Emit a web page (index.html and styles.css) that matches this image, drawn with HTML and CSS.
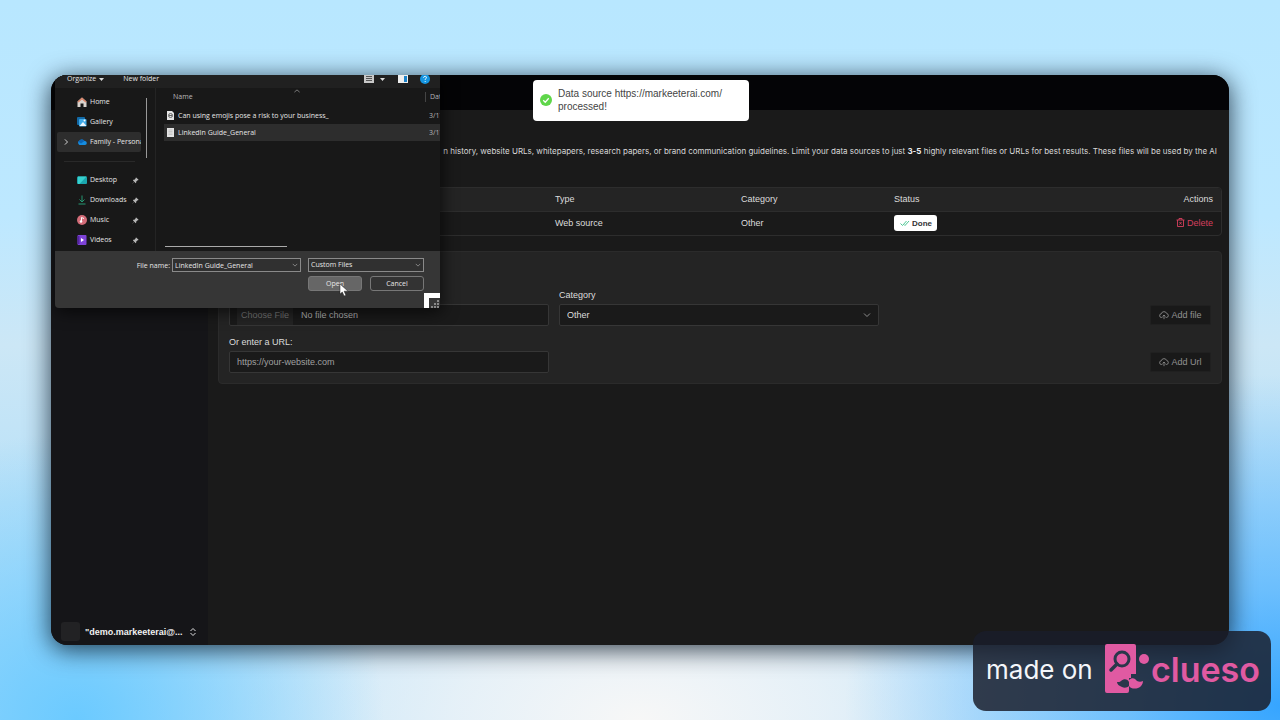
FILE: index.html
```html
<!DOCTYPE html>
<html lang="en">
<head>
<meta charset="utf-8">
<title>Data sources</title>
<link rel="stylesheet" href="styles.css">
</head>
<body>
<svg width="0" height="0" class="defs" aria-hidden="true">
  <symbol id="pin" viewBox="0 0 16 16"><path d="M9.5 1 15 6.500 13.500 8 12.500 7.700 9.800 10.500 9.500 13 8.300 14 5.300 11 1.500 15 1 14.500 5 10.700 2 7.700 3 6.500 5.500 6.200 8.300 3.500 8 2.500Z" fill="#b5b5b5"/></symbol>
  <symbol id="chev" viewBox="0 0 16 16"><path d="M2 5l6 6 6-6" fill="none" stroke="currentColor" stroke-width="1.800"/></symbol>
  <symbol id="cloud" viewBox="0 0 24 24"><path d="M8 18H6.500A4.500 4.500 0 0 1 5.500 9 6.800 6.800 0 0 1 18.500 8.500 4.800 4.800 0 0 1 18 18h-2M12 22v-9M8.500 15.500 12 12l3.500 3.500" fill="none" stroke="currentColor" stroke-width="2"/></symbol>
</svg>
<div class="scene">
  <div class="window">
    <header class="topbar"></header>
    <div class="body">
      <aside class="sidebar">
        <button class="user" type="button">
          <span class="avatar"></span>
          <span class="user-name">"demo.markeeterai@...</span>
          <svg class="i8" viewBox="0 0 16 16"><path d="M3 6l5-5 5 5M3 10l5 5 5-5" fill="none" stroke="#ddd" stroke-width="2"/></svg>
        </button>
      </aside>
      <main class="main">
        <p class="intro">n history, website URLs, whitepapers, research papers, or brand communication guidelines. Limit your data sources to just <b>3-5</b> highly relevant files or URLs for best results. These files will be used by the AI</p>
        <div class="table-wrap">
          <table>
            <colgroup><col class="c-name"><col class="c-type"><col class="c-cat"><col class="c-status"><col></colgroup>
            <thead><tr><th></th><th>Type</th><th>Category</th><th>Status</th><th class="right">Actions</th></tr></thead>
            <tbody><tr><td></td><td>Web source</td><td>Other</td>
              <td><span class="done"><svg class="i10" viewBox="0 0 20 16"><path d="M1 9l4 4 8-9M8 11l2 2 8-9" fill="none" stroke="#4fc795" stroke-width="2"/></svg>Done</span></td>
              <td class="right"><button class="delete" type="button"><svg class="i9" viewBox="0 0 18 18"><path d="M1 4h16M6 4V1h6v3M3 4v13h12V4M7 8l4 5M11 8l-4 5" fill="none" stroke="currentColor" stroke-width="1.800"/></svg>Delete</button></td></tr></tbody>
          </table>
        </div>
        <form class="card">
          <div class="field file-field"><input type="file" aria-label="File"></div>
          <div class="field"><label for="cat">Category</label>
            <div class="select"><select id="cat"><option>Other</option></select><svg class="i8"><use href="#chev"/></svg></div></div>
          <button class="add" type="button"><svg class="i10"><use href="#cloud"/></svg>Add file</button>
          <div class="field"><label for="url">Or enter a URL:</label><input id="url" type="url" placeholder="https://your-website.com"></div>
          <button class="add last" type="button"><svg class="i10"><use href="#cloud"/></svg>Add Url</button>
        </form>
      </main>
    </div>

    <section class="dialog" role="dialog" aria-label="Open file">
      <div class="tools">
        <button type="button">Organize <svg class="i5" viewBox="0 0 10 10"><path d="M0 2h10L5 8z" fill="#ddd"/></svg></button>
        <button type="button">New folder</button>
        <span class="tool-icons">
          <svg class="i10" viewBox="0 0 10 10"><path d="M0 0h10v9H0z" fill="#c8c8c8"/><path d="M2 2.500h6M2 4.500h6M2 6.500h6" stroke="#555"/></svg>
          <svg class="i5" viewBox="0 0 10 10"><path d="M0 2h10L5 8z" fill="#ddd"/></svg>
          <svg class="i10 pane" viewBox="0 0 10 10"><path d="M0 1h10v8H0z" fill="#eee"/><path d="M6 2h3v6H6z" fill="#1c82c8"/></svg>
          <svg class="i10" viewBox="0 0 10 10"><circle cx="5" cy="5" r="5" fill="#1595e0"/><path d="M3.500 3.800Q3.700 2.200 5.200 2.300T6.400 4Q6.200 4.800 5.200 5.200V6M5.200 7v1" fill="none" stroke="#d8f2ff"/></svg>
        </span>
      </div>
      <div class="browser">
        <nav class="places">
          <ul>
            <li><svg class="i10" viewBox="0 0 20 20"><path d="M1 9 10 1l9 8v11h-6v-7H7v7H1z" fill="#d9d3ce"/><path d="M1 9 10 1l9 8-2 2-7-6-7 6z" fill="#d98368"/></svg>Home</li>
            <li><svg class="i10" viewBox="0 0 20 20"><rect width="16" height="16" rx="2" fill="#1269a6"/><rect x="4" y="4" width="15" height="15" rx="2" fill="#3da9e8"/><path d="M5 18l7-8 7 8z" fill="#eaf6ff"/><circle cx="15" cy="7" r="2" fill="#fff"/></svg>Gallery</li>
            <li class="current"><svg class="i6 expand" viewBox="0 0 16 16"><path d="M5 1l7 7-7 7" fill="none" stroke="#ddd" stroke-width="2.500"/></svg><svg class="i10" viewBox="0 0 20 20"><path d="M5 16a5 5 0 0 1 0-9 6 6 0 0 1 10 1 4 4 0 0 1 1 8z" fill="#168de0"/><path d="M5 7a6 6 0 0 1 10 1l-7 5-6-4z" fill="#0b64b5"/></svg><span class="clip">Family - Persona</span></li>
          </ul>
          <hr>
          <ul>
            <li><svg class="i10" viewBox="0 0 20 20"><rect y="3" width="20" height="15" rx="2" fill="#1ba6ad"/><path d="M2 3h17L5 18H2z" fill="#37d0ce"/></svg>Desktop<svg class="i7 pin"><use href="#pin"/></svg></li>
            <li><svg class="i10" viewBox="0 0 20 20"><path d="M10 1v13M5 9l5 5 5-5M3 18h14" fill="none" stroke="#259873" stroke-width="2"/></svg>Downloads<svg class="i7 pin"><use href="#pin"/></svg></li>
            <li><svg class="i10" viewBox="0 0 20 20"><circle cx="10" cy="10" r="10" fill="#d36c78"/><path d="M9 13V5l5 2" fill="none" stroke="#fff" stroke-width="2"/><circle cx="8" cy="13" r="2.500" fill="#fff"/></svg>Music<svg class="i7 pin"><use href="#pin"/></svg></li>
            <li><svg class="i10" viewBox="0 0 20 20"><rect x="1" width="18" height="20" rx="2" fill="#7e43d8"/><path d="M1 2h4v16H1z" fill="#5424a0"/><path d="M8 6l6 4-6 4z" fill="#fff"/></svg>Videos<svg class="i7 pin"><use href="#pin"/></svg></li>
          </ul>
        </nav>
        <div class="files">
          <div class="row head"><span>Name</span><svg class="i6 sort" viewBox="0 0 16 16"><path d="M1 11l7-6 7 6" fill="none" stroke="#999" stroke-width="2"/></svg><span class="date">Date</span></div>
          <div class="row"><svg class="i9" viewBox="0 0 18 18"><path d="M2 0h10l4 4v14H2z" fill="#e4e4e4"/><circle cx="9" cy="9" r="4" fill="none" stroke="#666" stroke-width="2"/><path d="M6 9h6" stroke="#666" stroke-width="2"/></svg><span>Can using emojis pose a risk to your business_</span><span class="date">3/17</span></div>
          <div class="row picked"><svg class="i9" viewBox="0 0 18 18"><path d="M2 0h14v18H2z" fill="#e4e4e4"/><path d="M5 4h8M5 7h8M5 10h8M5 13h8" stroke="#aaa"/></svg><span>LinkedIn Guide_General</span><span class="date">3/17</span></div>
          <div class="scroll"></div>
        </div>
      </div>
      <div class="foot">
        <div class="foot-row"><label for="fname">File name:</label>
          <div class="combo name"><input id="fname" type="text" value="LinkedIn Guide_General"><svg class="i6"><use href="#chev"/></svg></div>
          <div class="combo kind"><select aria-label="File type"><option>Custom Files</option></select><svg class="i6"><use href="#chev"/></svg></div></div>
        <div class="foot-row actions"><button class="open" type="button">Open</button><button type="button">Cancel</button></div>
        <svg class="grip" viewBox="0 0 16 15"><path d="M0 0h16v5H5v10H0z" fill="#fff"/><path d="M13 7h2v2h-2zM10 10h2v2h-2zM13 10h2v2h-2zM7 13h2v2H7zM10 13h2v2h-2zM13 13h2v2h-2z" fill="#888"/></svg>
        <svg class="cursor" viewBox="0 0 10 15"><path d="M1 1v10l2.300-2 1.800 4 1.800-.8-1.800-4H9z" fill="#fff" stroke="#222" stroke-width=".5"/></svg>
      </div>
    </section>

    <div class="toast" role="status">
      <svg class="i12" viewBox="0 0 24 24"><circle cx="12" cy="12" r="12" fill="#5fd64a"/><path d="M6.500 12.500l4 4 7-8" fill="none" stroke="#fff" stroke-width="2.500"/></svg>
      <span>Data source https://markeeterai.com/ processed!</span>
    </div>
  </div>
  <div class="badge">
    <span class="made">made on</span>
    <svg class="mark" viewBox="0 0 44 50"><path d="M2 0h27q2 0 2 2v28h-5v4h-2v13q0 2-2 2H2q-2 0-2-2V2q0-2 2-2z" fill="#e05aa2"/><circle cx="17" cy="15" r="7" fill="none" stroke="#29374b" stroke-width="3"/><path d="M12 20l-6 6" stroke="#29374b" stroke-width="3.500" stroke-linecap="round"/><circle cx="39" cy="15" r="5" fill="#e05aa2"/><path d="M24 42c-2 2-5 2-7 1-3-1-5-3-5-5 2 0 3 0 4-1 3-3 7-2 8 1z" fill="#29374b"/><path d="M24 42v-6c3-3 6-2 8 1 2 1 4 1 6 0 0 3-2 6-5 7-3 1-7 1-9-2z" fill="#e05aa2"/></svg>
    <span class="brand">clueso</span>
  </div>
</div>
</body>
</html>
```
FILE: styles.css
```css
* { box-sizing: border-box; }
body { margin: 0; font-family: "Liberation Sans", Arial, sans-serif; font-size: 9px; color: #dcdcdc; }
button, input, select { font: inherit; color: inherit; margin: 0; }
button { border: 0; background: none; padding: 0; display: flex; align-items: center; justify-content: center; }
svg { flex: none; display: block; }
.defs { position: absolute; }
.i5 { width: 5px; height: 5px; }
.i6 { width: 6px; height: 6px; }
.i7 { width: 7px; height: 7px; }
.i8 { width: 8px; height: 8px; }
.i9 { width: 9px; height: 9px; }
.i10 { width: 10px; height: 10px; }
.i12 { width: 12px; height: 12px; }

.scene {
  position: relative; display: flex; min-height: 100vh; padding: 75px 51px;
  background:
    radial-gradient(ellipse 24% 40% at 6% 100%, #6bcaff 0, transparent 100%),
    radial-gradient(ellipse 34% 46% at 100% 98%, #36a5ff 0, #4cb0ffb0 35%, transparent 100%),
    radial-gradient(ellipse 48% 46% at 50% 100%, #f7f7f7 0, #f3f5f7d0 30%, transparent 100%),
    linear-gradient(#b8e7ff 0, #bde8ff 30%, #cce7f6 48%, #b9e1f8 70%, #a8dcfb 100%);
}
.window {
  position: relative; flex: 1; display: flex; flex-direction: column; overflow: hidden;
  border-radius: 16px; background: #1a1a1a;
}
.scene::before {
  content: ""; position: absolute; inset: 75px 51px; border-radius: 16px;
  box-shadow: 0 4px 24px 1px rgba(0, 15, 30, .75);
}
.topbar { height: 35px; background: #040406; }
.body { flex: 1; display: flex; }
.sidebar { width: 157px; flex: none; display: flex; align-items: flex-end; padding: 0 10px 4px; background: #151518; }
.user { gap: 5px; font-weight: bold; color: #f0f0f0; }
.user .i8 { margin-left: 1px; }
.avatar { width: 19px; height: 19px; border-radius: 3px; background: #222224; }
.main { flex: 1; min-width: 0; padding: 35px 7px 0 10px; }
.intro { margin: 0; padding-right: 5px; font-family: Inter, "Liberation Sans", sans-serif; font-size: 8px; line-height: 12px; white-space: nowrap; text-align: right; color: #d8d8d8; }
.intro b { color: #eee; }

.table-wrap { margin-top: 30px; border: 1px solid #2d2d2d; border-radius: 4px; overflow: hidden; }
table { width: 100%; border-collapse: collapse; table-layout: fixed; }
th, td { height: 24px; padding: 0 8px; text-align: left; font-weight: normal; }
th { height: 23px; }
thead { background: #242424; border-bottom: 1px solid #2d2d2d; }
.c-name { width: 328px; }
.c-type { width: 186px; }
.c-cat { width: 153px; }
.c-status { width: 153px; }
.right { text-align: right; }
.done { display: inline-flex; align-items: center; gap: 2px; height: 16px; padding: 0 5px 0 6px; border-radius: 3px; background: #fff; color: #333; font-size: 8px; font-weight: bold; }
.delete { display: inline-flex; gap: 2px; color: #d63f5d; }

.card {
  display: grid; grid-template-columns: 320px 320px 1fr; gap: 11px 10px; align-items: end;
  margin-top: 15px; padding: 38px 10px 10px; border: 1px solid #2b2b2b; border-radius: 4px; background: #242424;
}
.field { display: flex; flex-direction: column; gap: 3px; }
label { line-height: 11px; }
.field input, .select select {
  width: 100%; height: 22px; padding: 0 7px; border: 1px solid #363636; border-radius: 2px; background: #1a1a1a; color: #ddd;
}
.field input[type="file"] { line-height: 20px; color: #b5b5b5; }
input::file-selector-button { height: 20px; margin: 0 8px 0 0; padding: 0 4px; border: 0; background: #242424; color: #777; font: inherit; }
input::placeholder { color: #a0a0a0; opacity: 1; }
.select, .combo { position: relative; display: flex; align-items: center; }
.select select, .combo select { appearance: none; }
.select svg { position: absolute; right: 8px; color: #999; }
.add { justify-self: end; height: 20px; width: 61px; gap: 2px; margin-bottom: 1px; border: 1px solid #202020; border-radius: 2px; background: #191919; color: #929292; }
.last { grid-column: 3; }

.dialog {
  position: absolute; top: 0; left: 4px; width: 385px;
  background: #181818; color: #e6e6e6; border-radius: 0 0 4px 4px; box-shadow: 2px 4px 16px rgba(0, 0, 0, .65);
  font-family: "Open Sans", "Noto Sans", sans-serif; font-size: 7px; line-height: 10px;
}
.tools { display: flex; align-items: center; height: 13px; padding: 0 10px 5px 12px; gap: 19px; background: #202020; }
.tools button { gap: 3px; }
.tool-icons { display: flex; align-items: center; gap: 6px; margin-left: auto; }
.pane { margin: 0 6px 0 7px; }
.browser { display: flex; height: 163px; }
.places { position: relative; width: 101px; flex: none; padding-top: 4px; border-right: 1px solid #242424; }
.places::after { content: ""; position: absolute; right: 8px; top: 10px; width: 1px; height: 60px; background: #999; }
.places ul { list-style: none; margin: 0; padding: 0; }
.places li { position: relative; display: flex; align-items: center; gap: 3px; height: 20px; padding-left: 22px; margin-right: 14px; }
.places .current { margin-left: 2px; padding-left: 20px; background: #2d2d2d; border-radius: 2px; }
.clip { overflow: hidden; white-space: nowrap; }
.expand { position: absolute; left: 6px; }
.places .pin { margin-left: auto; margin-right: 2px; }
.places hr { height: 1px; margin: 9px 20px 8px 9px; border: 0; background: #292929; }
.files { flex: 1; min-width: 0; display: flex; flex-direction: column; padding-left: 8px; }
.row { position: relative; display: flex; align-items: center; gap: 3px; height: 17px; padding-left: 2px; white-space: nowrap; overflow: hidden; }
.head { padding-left: 9px; margin-bottom: 2px; color: #bbb; }
.sort { position: absolute; left: 130px; top: 0; }
.date { width: 11px; margin-left: auto; overflow: hidden; color: #b5b5b5; }
.head .date { width: 15px; padding-left: 4px; border-left: 1px solid #444; }
.picked { background: #2d2d2d; }
.scroll { width: 122px; height: 1px; margin: auto 0 4px 1px; background: #aaa; }
.foot { position: relative; display: flex; flex-direction: column; gap: 4px; height: 57px; padding: 7px 16px 0; background: #363636; border-radius: 0 0 4px 4px; }
.foot-row { display: flex; justify-content: flex-end; align-items: center; }
.combo { height: 14px; border: 1px solid #8a8a8a; background: #303030; }
.combo input, .combo select { width: 100%; height: 12px; padding: 0 2px; border: 0; background: none; }
.combo svg { position: absolute; right: 2px; color: #aaa; }
.name { width: 129px; margin: 0 7px 0 2px; }
.kind { width: 116px; }
.actions { gap: 8px; }
.actions button { width: 54px; height: 15px; border: 1px solid #777; border-radius: 3px; background: #333; }
.actions .open { background: #666; }
.grip { position: absolute; right: 0; bottom: 0; width: 16px; height: 15px; }
.cursor { position: absolute; left: 284px; top: 32px; width: 10px; height: 15px; }

.toast {
  position: absolute; top: 5px; left: calc(50% + 1px); transform: translateX(-50%); display: flex; align-items: center; gap: 6px;
  width: 216px; height: 41px; padding: 0 20px 2px 7px; border-radius: 4px; background: #fff; color: #444; font-size: 10px; line-height: 13px;
}
.badge {
  position: absolute; right: 9px; bottom: 9px; display: flex; align-items: center; width: 298px; height: 80px; padding: 0 11px 4px 13px;
  border-radius: 13px; background: rgba(25, 29, 42, .84); font-family: Inter, sans-serif; white-space: nowrap;
}
.made { font-size: 26px; color: #f4f6fa; }
.mark { width: 44px; height: 50px; margin: 0 2px 0 auto; }
.brand { font-size: 34px; font-weight: 600; color: #e05aa2; }
```
